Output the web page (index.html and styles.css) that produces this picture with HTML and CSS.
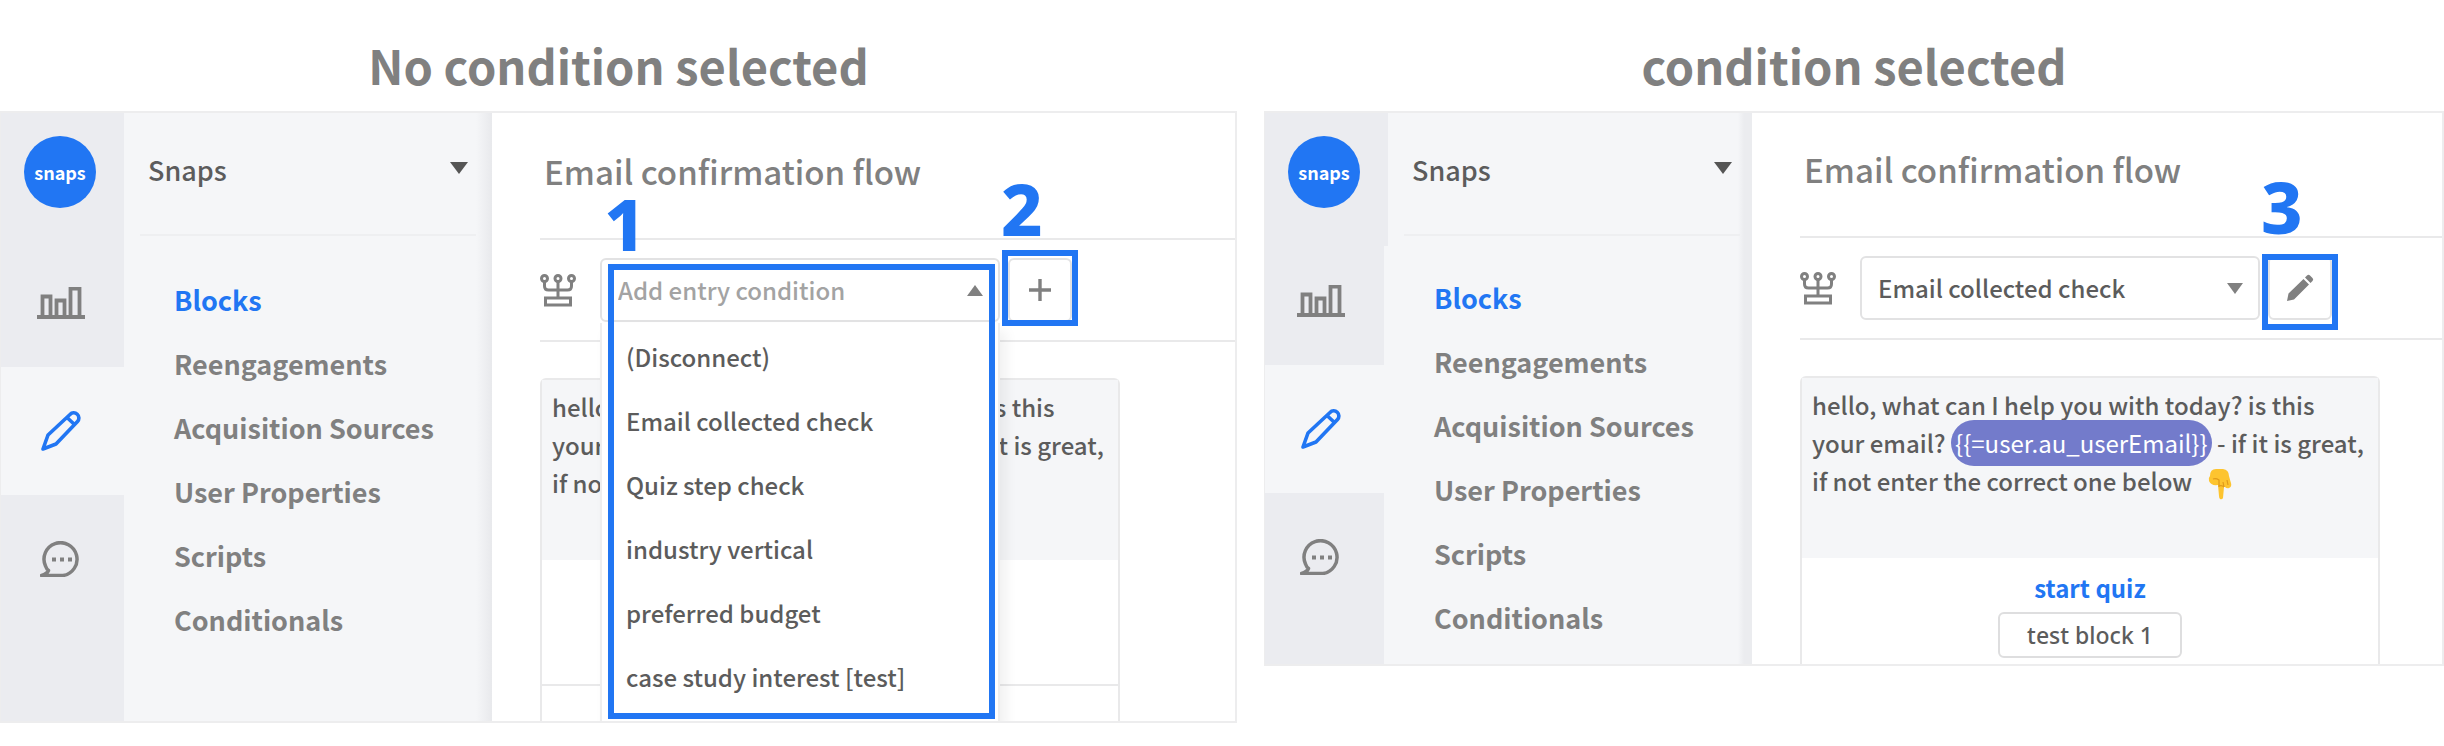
FILE: index.html
```
<!DOCTYPE html>
<html lang="en">
<head>
<meta charset="utf-8">
<title>Entry conditions</title>
<link rel="stylesheet" href="styles.css">
</head>
<body>
<svg class="defs" aria-hidden="true">
  <symbol id="i-chart" viewBox="0 0 48 32"><path d="M0 30h48M5.500 29V9.500h8V29M19.500 29V13.500h8V29M33.500 29V1.500h9V29" fill="none" stroke="currentColor" stroke-width="3.800"/></symbol>
  <symbol id="i-pencil" viewBox="0 0 40 40"><path d="M2 38 7 24 29 3.500a5 5 0 0 1 7.500 7L15 33ZM26 6.500l7.500 7" fill="none" stroke="currentColor" stroke-width="3.600" stroke-linejoin="round"/></symbol>
  <symbol id="i-chat" viewBox="0 0 42 36"><path d="M1.500 34.500h21.500a16.500 16.500 0 1 0-17.500-9.500q1 3 3 4.500-1.500 3.500-7 5Z" fill="none" stroke="currentColor" stroke-width="3.500" stroke-linejoin="round"/><path d="M12 16.500h4v4h-4zM20 16.500h4v4h-4zM28 16.500h4v4h-4z" fill="currentColor"/></symbol>
  <symbol id="i-branch" viewBox="0 0 36 34"><g fill="none" stroke="currentColor" stroke-width="3"><circle cx="4.500" cy="5.500" r="3"/><circle cx="18" cy="5.500" r="3"/><circle cx="31.500" cy="5.500" r="3"/><path d="M4.500 8.500V13q0 4 4 4h19q4 0 4-4V8.500M18 8.500V25M5.500 25h25v7h-25z"/></g></symbol>
  <symbol id="i-plus" viewBox="0 0 24 24"><path d="M12 1v22M1 12h22" stroke="currentColor" stroke-width="3.400"/></symbol>
  <symbol id="i-edit" viewBox="0 0 28 28"><path d="M1 27 2.500 19.500 17.500 5l5.500 5.500L8 25.500ZM19 3.500l2-2q1.500-1.500 3 0l2.500 2.500q1.500 1.500 0 3l-2 2Z" fill="currentColor"/></symbol>
  <symbol id="i-point" viewBox="0 0 24 32"><path d="M2 8Q2 1 8 1h7q6 1 6 7 1 4 2 7 1 4-2 5-2 1-4-1h-1l-1 11q-1 2-3 1-1-1-1-3l-1-11Q3 18 1 13 0 10 2 8Z" fill="#fdc42f"/><path d="M11 19V12q-3-2-6-1m6 7q3-1 5 1m0 0-1-5m5 3-1-5" fill="none" stroke="#e09a1a" stroke-width="1.200"/></symbol>
</svg>

<main class="compare">
  <section class="shot">
    <h1 class="caption">No condition selected</h1>
    <div class="panel panel-open">
      <nav class="rail" aria-label="Sections">
        <div class="rail-head"><a class="logo" href="#">snaps</a></div>
        <a class="cell" href="#" aria-label="Analytics"><svg width="48" height="32"><use href="#i-chart"/></svg></a>
        <a class="cell is-active" href="#" aria-label="Build"><svg width="40" height="40"><use href="#i-pencil"/></svg></a>
        <a class="cell" href="#" aria-label="Messages"><svg width="42" height="36"><use href="#i-chat"/></svg></a>
      </nav>
      <aside class="side">
        <div class="account caret"><select aria-label="Account"><option>Snaps</option></select></div>
        <ul class="menu">
          <li><a class="is-active" href="#">Blocks</a></li>
          <li><a href="#">Reengagements</a></li>
          <li><a href="#">Acquisition Sources</a></li>
          <li><a href="#">User Properties</a></li>
          <li><a href="#">Scripts</a></li>
          <li><a href="#">Conditionals</a></li>
        </ul>
      </aside>
      <div class="content">
        <h2 class="title">Email confirmation flow</h2>
        <div class="toolbar">
          <svg class="branch" width="36" height="34"><use href="#i-branch"/></svg>
          <div class="field caret is-open">
            <select aria-label="Entry condition"><option>Add entry condition</option></select>
            <ul class="options" role="listbox" aria-label="Conditions">
              <li role="option">(Disconnect)</li>
              <li role="option">Email collected check</li>
              <li role="option">Quiz step check</li>
              <li role="option">industry vertical</li>
              <li role="option">preferred budget</li>
              <li role="option">case study interest [test]</li>
            </ul>
            <span class="mark mark-list"></span>
            <strong class="step step-list">1</strong>
          </div>
          <div class="action">
            <button type="button" aria-label="Add condition"><svg width="24" height="24"><use href="#i-plus"/></svg></button>
            <span class="mark mark-add"></span>
            <strong class="step">2</strong>
          </div>
        </div>
        <article class="card">
          <p class="message">hello, what can I help you with today? is this<br>your email? <span class="token">{{=user.au_userEmail}}</span> - if it is great,<br>if not enter the correct one below</p>
          <div class="card-body"></div>
          <div class="card-foot"></div>
        </article>
      </div>
    </div>
  </section>

  <section class="shot">
    <h1 class="caption">condition selected</h1>
    <div class="panel panel-set">
      <nav class="rail" aria-label="Sections">
        <div class="rail-head"><a class="logo" href="#">snaps</a></div>
        <a class="cell" href="#" aria-label="Analytics"><svg width="48" height="32"><use href="#i-chart"/></svg></a>
        <a class="cell is-active" href="#" aria-label="Build"><svg width="40" height="40"><use href="#i-pencil"/></svg></a>
        <a class="cell" href="#" aria-label="Messages"><svg width="42" height="36"><use href="#i-chat"/></svg></a>
      </nav>
      <aside class="side">
        <div class="account caret"><select aria-label="Account"><option>Snaps</option></select></div>
        <ul class="menu">
          <li><a class="is-active" href="#">Blocks</a></li>
          <li><a href="#">Reengagements</a></li>
          <li><a href="#">Acquisition Sources</a></li>
          <li><a href="#">User Properties</a></li>
          <li><a href="#">Scripts</a></li>
          <li><a href="#">Conditionals</a></li>
        </ul>
      </aside>
      <div class="content">
        <h2 class="title">Email confirmation flow</h2>
        <div class="toolbar">
          <svg class="branch" width="36" height="34"><use href="#i-branch"/></svg>
          <div class="field caret">
            <select aria-label="Entry condition"><option>Email collected check</option></select>
          </div>
          <div class="action">
            <button type="button" aria-label="Edit condition"><svg width="28" height="28"><use href="#i-edit"/></svg></button>
            <span class="mark mark-edit"></span>
            <strong class="step">3</strong>
          </div>
        </div>
        <article class="card">
          <p class="message">hello, what can I help you with today? is this<br>your email? <span class="token">{{=user.au_userEmail}}</span> - if it is great,<br>if not enter the correct one below <svg class="point" width="24" height="32" role="img" aria-label="pointing down"><use href="#i-point"/></svg></p>
          <div class="reply">
            <a href="#">start quiz</a>
            <button type="button">test block 1</button>
          </div>
        </article>
      </div>
    </div>
  </section>
</main>
</body>
</html>
```
FILE: styles.css
```
:root {
  --blue: #2176f3;
  --line: #e9e9ea;
  --rail: #ebecf0;
  --side: #f5f6f8;
  --muted: #808080;
  --text: #5c5c5c;
}

* { box-sizing: border-box; }

body {
  margin: 0;
  background: #fff;
  color: var(--text);
  font: 500 24px/38px "Noto Sans CJK JP", "Noto Sans", sans-serif;
}

h1, h2, p, ul { margin: 0; padding: 0; }
ul { list-style: none; }
a { color: inherit; text-decoration: none; }
svg { display: block; }
.defs { position: absolute; width: 0; height: 0; }

select, button {
  margin: 0;
  font: inherit;
  color: inherit;
  background: none;
  border: 0;
  appearance: none;
}

.compare {
  display: grid;
  grid-template-columns: 1237fr 1180fr;
  gap: 27px;
  align-items: start;
}

.shot { min-width: 0; }

.caption {
  padding: 29px 0 10px;
  color: var(--muted);
  font-size: 47px;
  font-weight: 700;
  line-height: 72px;
  text-align: center;
}

.panel {
  display: flex;
  overflow: hidden;
  border: 2px solid #ededee;
  border-left-width: 1px;
}

/* icon rail */
.rail {
  flex: none;
  width: 123px;
  background: var(--rail);
  color: var(--muted);
}
.rail-head {
  position: relative;
  height: 126px;
  padding: 23px 0 0 23px;
  background: var(--rail);
}
.logo {
  display: flex;
  align-items: center;
  justify-content: center;
  width: 72px;
  height: 72px;
  border-radius: 50%;
  background: var(--blue);
  color: #fff;
  font-size: 18px;
  font-weight: 700;
  line-height: 24px;
}
.cell {
  display: flex;
  align-items: center;
  justify-content: center;
  height: 128px;
  padding-right: 4px;
}
.cell.is-active { background: var(--side); color: var(--blue); }

/* side navigation */
.side {
  flex: none;
  width: 368px;
  background: linear-gradient(to left, #e8e9ec, var(--side) 16px);
}
.account {
  height: 123px;
  margin: 0 16px;
  padding: 35px 0 0 8px;
  border-bottom: 2px solid #eeeff1;
}
.account select {
  display: block;
  width: 100%;
  height: 44px;
  padding: 0;
  font-size: 27px;
}
.menu { padding-top: 32px; }
.menu a {
  display: block;
  padding-left: 50px;
  color: var(--muted);
  font-size: 27px;
  font-weight: 700;
  line-height: 64px;
}
.menu .is-active { color: var(--blue); }

.caret { position: relative; }
.caret::after {
  content: "";
  position: absolute;
  top: 27px;
  right: 17px;
  border: 8px solid transparent;
  border-top: 11px solid var(--muted);
  border-bottom: 0;
  pointer-events: none;
}
.account.caret::after {
  top: 49px;
  right: 8px;
  border-width: 12px 9px 0;
  border-top-color: #555;
}
.field.is-open::after {
  border-top: 0;
  border-bottom: 11px solid var(--muted);
}

/* main area */
.content { flex: 1; min-width: 0; padding-left: 48px; }
.title {
  padding: 38px 0 47px 4px;
  color: var(--muted);
  font-size: 33px;
  font-weight: 500;
  line-height: 40px;
}
.toolbar {
  display: flex;
  align-items: center;
  gap: 8px;
  padding: 18px 0;
  border: solid var(--line);
  border-width: 2px 0;
}
.branch { margin-right: 16px; color: var(--muted); }
.field { width: 400px; }
.field select {
  display: block;
  width: 100%;
  height: 64px;
  padding: 0 16px;
  border: 2px solid #e2e2e3;
  border-radius: 6px;
  background: #fff;
}
.is-open select { color: #a3a3a3; }
.options {
  position: absolute;
  z-index: 2;
  top: 65px;
  left: 0;
  right: 0;
  padding: 2px 0 16px;
  border: solid #eee;
  border-width: 0 2px;
  background: #fff;
  box-shadow: 6px 8px 12px rgba(0, 0, 0, 0.06);
}
.options li { padding-left: 24px; line-height: 64px; }
.action { position: relative; }
.action button {
  display: flex;
  align-items: center;
  justify-content: center;
  width: 64px;
  height: 64px;
  padding: 0;
  border: 2px solid #e2e2e3;
  border-radius: 6px;
  color: var(--muted);
}

/* numbered callouts over the controls */
.mark {
  position: absolute;
  z-index: 3;
  border: 6px solid var(--blue);
  pointer-events: none;
}
.mark-list { inset: 6px 5px -397px 8px; }
.mark-add { inset: -8px -6px -4px; }
.mark-edit { inset: -2px -6px -10px; }
.step {
  position: absolute;
  z-index: 3;
  top: -76px;
  left: -7px;
  color: var(--blue);
  font: 800 72px/52px "Noto Sans", sans-serif;
}
.step-list { top: -61px; left: 4px; }

/* message card */
.card {
  width: 580px;
  margin-top: 36px;
  border: 2px solid var(--line);
  border-bottom: 0;
  border-radius: 6px 6px 0 0;
}
.message {
  padding: 8px 10px 58px;
  background: var(--side);
  white-space: nowrap;
}
.token {
  padding: 5px 4px 6px;
  border-radius: 23px;
  background: #737bcb;
  color: #fff;
  font-weight: 400;
}
.point { display: inline-block; margin-left: 10px; vertical-align: -9px; }
.card-body { height: 124px; }
.card-foot { height: 37px; border-top: 2px solid var(--line); }
.reply {
  display: flex;
  flex-direction: column;
  align-items: center;
  gap: 8px;
  padding: 14px 0 6px;
}
.reply a { color: var(--blue); font-weight: 700; line-height: 32px; }
.reply button {
  width: 184px;
  height: 46px;
  border: 2px solid #dededf;
  border-radius: 6px;
  font-family: "Noto Sans", sans-serif;
  font-size: 23px;
  line-height: 32px;
}

/* the second panel has a slimmer rail and sits slightly higher */
.panel-set .rail { width: 119px; }
.panel-set .rail-head { width: 123px; height: 133px; margin-bottom: -9px; }
.panel-set .cell { position: relative; padding-right: 8px; }
.panel-set .side { width: 368px; background: linear-gradient(to left, #ebecef 8px, var(--side) 14px); }
.panel-set .account { margin: 0 12px 0 20px; }
.panel-set .menu { padding-top: 30px; }
.panel-set .title { padding-top: 36px; }
```
